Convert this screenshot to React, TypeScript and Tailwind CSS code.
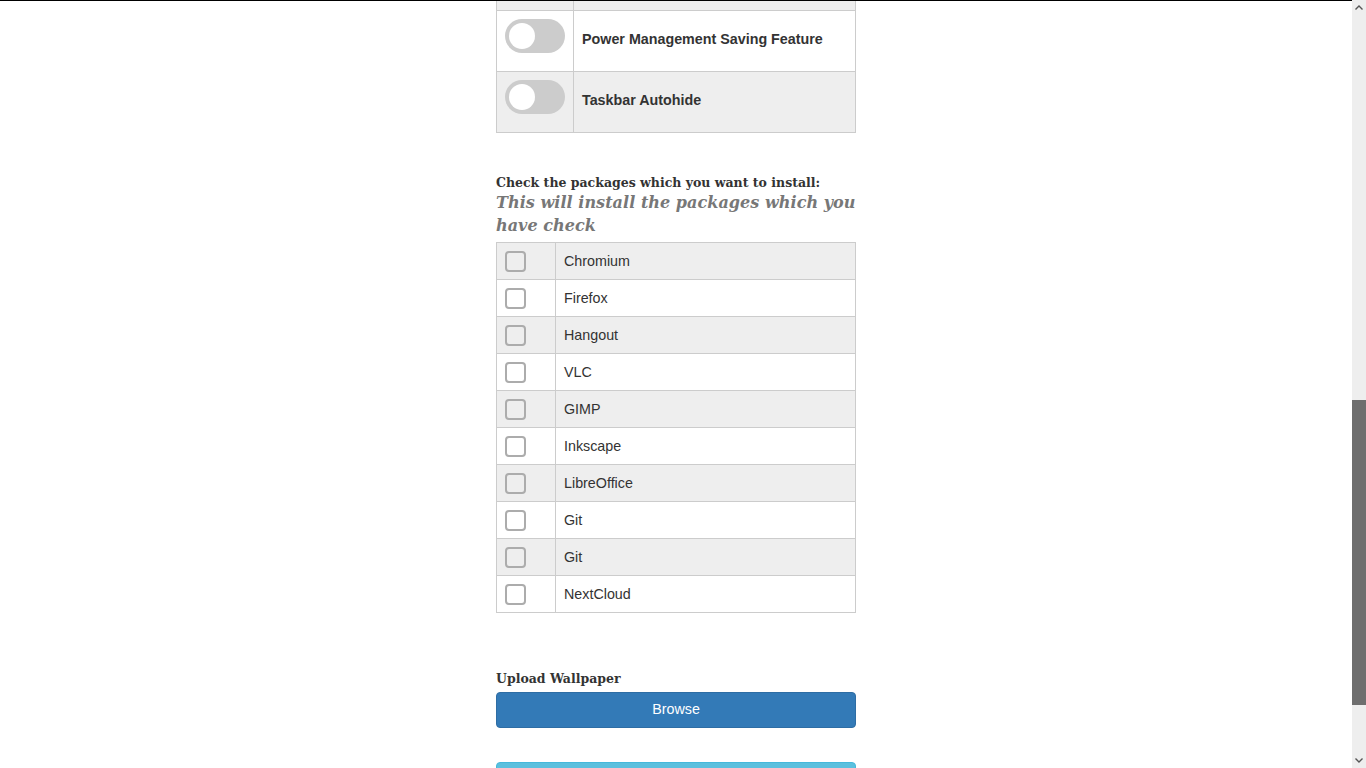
import React from "react";

const toggles = ["Power Management Saving Feature", "Taskbar Autohide"];
const packages = [
  "Chromium",
  "Firefox",
  "Hangout",
  "VLC",
  "GIMP",
  "Inkscape",
  "LibreOffice",
  "Git",
  "Git",
  "NextCloud",
];

function Toggle() {
  return (
    <div className="w-[60px] h-[34px] rounded-full bg-[#cccccc] flex items-center px-[4px]">
      <div className="w-[26px] h-[26px] rounded-full bg-white" />
    </div>
  );
}

function Checkbox() {
  return <div className="w-[21px] h-[21px] rounded-[4px] border-[2.5px] border-[#acacac]" />;
}

export default function App() {
  return (
    <div className="h-screen w-full flex overflow-hidden bg-white" style={{ fontFamily: '"Liberation Sans", Arial, sans-serif' }}>
      <div className="flex-1 flex flex-col overflow-hidden">
        <div className="h-px bg-black w-full shrink-0" />
        <div className="w-[360px] mx-auto flex flex-col text-[#333333]">
          {/* toggles table */}
          <div className="border-x border-[#cccccc]">
            <div className="h-[10px] flex bg-[#eeeeee] border-b border-[#cccccc]">
              <div className="w-[77px] border-r border-[#cccccc]" />
              <div className="flex-1" />
            </div>
            {toggles.map((t, i) => (
              <div
                key={t}
                className={`h-[61px] flex border-b border-[#cccccc] ${i % 2 === 1 ? "bg-[#eeeeee]" : "bg-white"}`}
              >
                <div className="w-[77px] border-r border-[#cccccc] pl-[8px] pt-[8px]">
                  <Toggle />
                </div>
                <div className="flex-1 flex items-center pl-[8px] pb-[5px] text-[14.3px] font-bold leading-[20px]">
                  {t}
                </div>
              </div>
            ))}
          </div>

          {/* packages heading */}
          <div className="mt-[42px]" style={{ fontFamily: '"DejaVu Serif", serif' }}>
            <div className="text-[12.5px] leading-[16px] font-bold text-[#333333]">
              Check the packages which you want to install:
            </div>
            <div className="text-[16px] leading-[23px] font-bold italic text-[#777777] tracking-[0.05px]">
              This will install the packages which you have check
            </div>
          </div>

          {/* packages table */}
          <div className="mt-[5px] border border-[#cccccc] border-b-0">
            {packages.map((p, i) => (
              <div
                key={p + i}
                className={`h-[37px] flex border-b border-[#cccccc] ${i % 2 === 0 ? "bg-[#eeeeee]" : "bg-white"}`}
              >
                <div className="w-[59px] border-r border-[#cccccc] pl-[8px] pt-[8px]">
                  <Checkbox />
                </div>
                <div className="flex-1 flex items-center pl-[8px] text-[14.3px] leading-[20px]">{p}</div>
              </div>
            ))}
          </div>

          {/* upload */}
          <div
            className="mt-[58px] text-[12.5px] leading-[16px] font-bold text-[#333333]"
            style={{ fontFamily: '"DejaVu Serif", serif' }}
          >
            Upload Wallpaper
          </div>
          <button className="mt-[5px] h-[36px] w-full rounded-[4px] bg-[#337ab7] border border-[#2e6da4] text-white text-[14.3px] flex items-center justify-center">
            Browse
          </button>
          <div className="mt-[34px] h-[36px] w-full rounded-[4px] bg-[#5bc0de] border border-[#46b8da] shrink-0" />
        </div>
      </div>

      {/* fake scrollbar */}
      <div className="w-[14px] h-screen bg-[#eeeeee] flex flex-col items-center shrink-0">
        <div className="h-[15px] flex items-center justify-center">
          <svg width="8" height="5" viewBox="0 0 8 5">
            <path d="M0.5 4.5 L4 1 L7.5 4.5" stroke="#555" strokeWidth="1.4" fill="none" />
          </svg>
        </div>
        <div className="h-[385px]" />
        <div className="w-full h-[305px] bg-[#6e6e6e]" />
        <div className="flex-1" />
        <div className="h-[15px] flex items-center justify-center">
          <svg width="8" height="5" viewBox="0 0 8 5">
            <path d="M0.5 0.5 L4 4 L7.5 0.5" stroke="#555" strokeWidth="1.4" fill="none" />
          </svg>
        </div>
      </div>
    </div>
  );
}
